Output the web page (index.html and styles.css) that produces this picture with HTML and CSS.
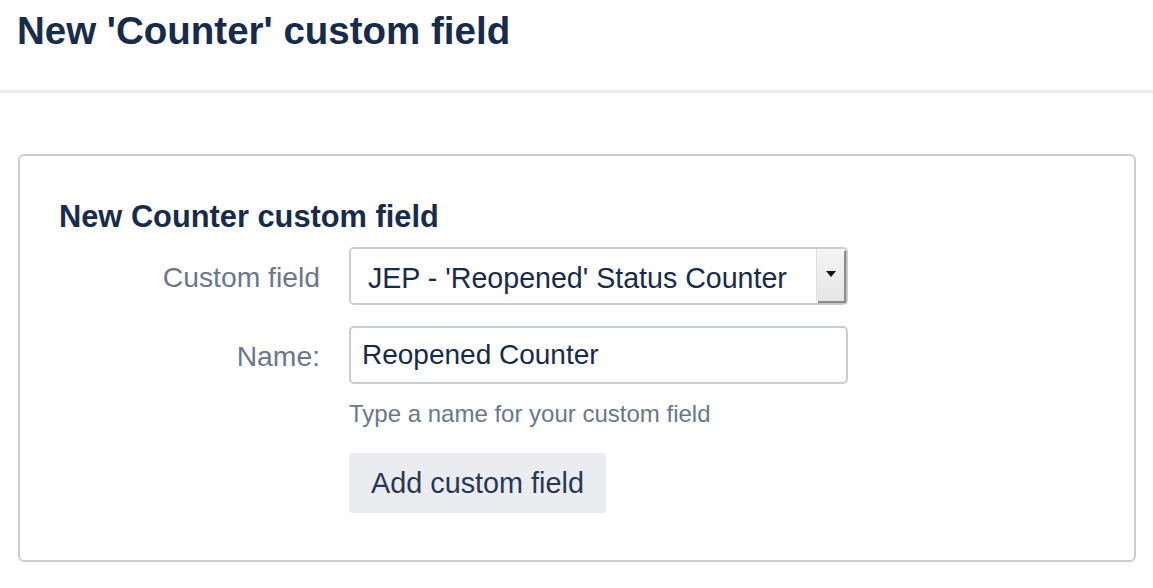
FILE: index.html
```html
<!DOCTYPE html>
<html lang="en">
<head>
<meta charset="utf-8">
<title>New 'Counter' custom field</title>
<link rel="stylesheet" href="styles.css">
</head>
<body>
<header class="page-header">
  <h1 class="page-title">New 'Counter' custom field</h1>
</header>
<main class="panel">
  <h2 class="panel-title">New Counter custom field</h2>
  <form class="form-grid">
    <label class="field-label">Custom field</label>
    <div class="select">
      <span class="select-value">JEP - 'Reopened' Status Counter</span>
      <span class="select-arrow"><span class="tri"></span></span>
    </div>
    <label class="field-label">Name:</label>
    <div class="field-stack">
      <div class="text-input">Reopened Counter</div>
      <div class="help">Type a name for your custom field</div>
      <div><button type="button" class="btn">Add custom field</button></div>
    </div>
  </form>
</main>
</body>
</html>
```

FILE: styles.css
```css
html, body {
  margin: 0;
  padding: 0;
  background: #ffffff;
}
body {
  font-family: "Liberation Sans", Arial, Helvetica, sans-serif;
  color: #172b4d;
  width: 1153px;
}
.page-header {
  padding: 8px 15px 36px 17px;
  border-bottom: 3px solid #ebecf0;
}
.page-title {
  margin: 0;
  font-size: 38.5px;
  line-height: 46px;
  font-weight: bold;
  color: #172b4d;
}
.panel {
  margin: 61px 17px 0 18px;
  border: 2px solid #cbcdd1;
  border-radius: 6px;
  padding: 43px 38px 47px 39px;
}
.panel-title {
  margin: 0 0 12px 0;
  font-size: 30.8px;
  line-height: 36px;
  font-weight: bold;
  color: #172b4d;
}
.form-grid {
  display: grid;
  grid-template-columns: 261px 499px;
  column-gap: 29px;
  row-gap: 20px;
  align-items: start;
}
.field-label {
  text-align: right;
  font-size: 28.3px;
  color: #6b778c;
  line-height: 58px;
  padding-top: 1px;
}
.select {
  box-sizing: border-box;
  height: 58px;
  border: 2px solid #c9ccd1;
  border-radius: 5px;
  display: flex;
  align-items: stretch;
  justify-content: space-between;
  background: #fff;
}
.select-value {
  padding-left: 17px;
  padding-top: 4px;
  font-size: 28.6px;
  line-height: 50px;
  color: #172b4d;
  white-space: nowrap;
}
.select-arrow {
  width: 28px;
  margin: 0 2px 2px 0;
  background: linear-gradient(#f4f4f4, #e6e6e6);
  border-left: 1px solid #e0e0e0;
  box-shadow: 2px 2px 1px #8c8c8c;
  display: flex;
  justify-content: center;
  padding-top: 22px;
  box-sizing: border-box;
}
.tri {
  width: 0;
  height: 0;
  border-left: 5px solid transparent;
  border-right: 5px solid transparent;
  border-top: 6px solid #111;
}
.field-stack {
  display: flex;
  flex-direction: column;
}
.text-input {
  box-sizing: border-box;
  height: 58px;
  border: 2px solid #c9ccd1;
  border-radius: 5px;
  padding-left: 11px;
  font-size: 28px;
  line-height: 54px;
  color: #172b4d;
}
.help {
  margin-top: 16px;
  font-size: 24px;
  line-height: 28px;
  color: #6b778c;
}
.btn {
  margin-top: 25px;
  height: 60px;
  width: 257px;
  border: none;
  border-radius: 4px;
  background: #ebecf0;
  color: #253858;
  font-family: "Liberation Sans", Arial, Helvetica, sans-serif;
  font-size: 28.8px;
  padding: 0;
}
```
